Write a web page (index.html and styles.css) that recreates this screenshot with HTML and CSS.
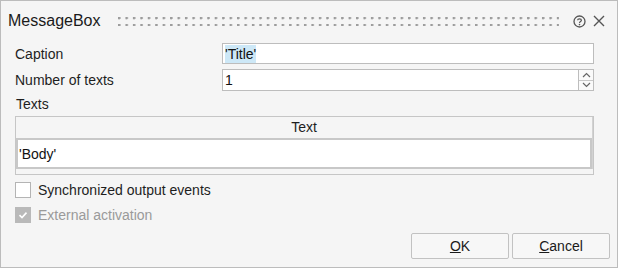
FILE: index.html
```html
<!DOCTYPE html>
<html lang="en">
<head>
    <meta charset="UTF-8">
    <title>MessageBox</title>
    <link rel="stylesheet" href="styles.css">
</head>
<body>
    <div class="window">
        <div class="titlebar">
            <span class="title">MessageBox</span>
            <span class="grip"></span>
            <svg class="icon" width="13" height="13" viewBox="0 0 13 13">
                <circle cx="6.5" cy="6.5" r="5.5" fill="none" stroke="#555" stroke-width="1.3"/>
                <path d="M4.6 5.2 C4.6 3.4 8.4 3.4 8.4 5.2 C8.4 6.5 6.5 6.4 6.5 7.9" fill="none" stroke="#555" stroke-width="1.2"/>
                <circle cx="6.5" cy="9.6" r="0.8" fill="#555"/>
            </svg>
            <svg class="icon close" width="12" height="12" viewBox="0 0 12 12">
                <path d="M1 1 L11 11 M11 1 L1 11" stroke="#555" stroke-width="1.4"/>
            </svg>
        </div>

        <div class="form">
            <label>Caption</label>
            <div class="field"><span class="selected">'Title'</span></div>
            <label>Number of texts</label>
            <div class="number">
                <div class="field">1</div>
                <div class="spinner">
                    <span class="spin">
                        <svg width="9" height="6" viewBox="0 0 9 6"><path d="M1 5 L4.5 1.5 L8 5" fill="none" stroke="#666" stroke-width="1.2"/></svg>
                    </span>
                    <span class="spin">
                        <svg width="9" height="6" viewBox="0 0 9 6"><path d="M1 1 L4.5 4.5 L8 1" fill="none" stroke="#666" stroke-width="1.2"/></svg>
                    </span>
                </div>
            </div>
        </div>

        <div class="section-label">Texts</div>
        <div class="texts-table">
            <div class="column">
                <div class="table-header">Text</div>
                <div class="table-row">'Body'</div>
            </div>
        </div>

        <div class="checks">
            <div class="check">
                <span class="box"></span>
                <span>Synchronized output events</span>
            </div>
            <div class="check disabled">
                <span class="box checked">
                    <svg width="12" height="12" viewBox="0 0 12 12"><path d="M2.5 6.2 L5 8.6 L9.5 3.6" fill="none" stroke="#fff" stroke-width="1.6"/></svg>
                </span>
                <span>External activation</span>
            </div>
        </div>

        <div class="buttons">
            <button class="btn"><u>O</u>K</button>
            <button class="btn"><u>C</u>ancel</button>
        </div>
    </div>
</body>
</html>
```

FILE: styles.css
```css
body {
    margin: 0;
    font-family: "Liberation Sans", Arial, sans-serif;
    font-size: 14px;
    color: #1e1e1e;
}

/* Window frame */
.window {
    width: 618px;
    height: 268px;
    box-sizing: border-box;
    border: 1px solid #bcbcbc;
    background-color: #f5f5f5;
    display: flex;
    flex-direction: column;
}

/* Title bar */
.titlebar {
    height: 40px;
    display: flex;
    align-items: center;
    padding: 0 12px 0 7px;
}

.title {
    font-size: 16px;
    color: #1a1a1a;
}

.grip {
    flex: 1;
    height: 9px;
    margin: 0 14px 0 17px;
    background-image: radial-gradient(circle at 1px 1px, #9c9c9c 1.3px, transparent 1.7px);
    background-size: 7.45px 7px;
}

.icon {
    display: block;
}

.close {
    margin-left: 7px;
}

/* Caption / number rows */
.form {
    display: grid;
    grid-template-columns: 207px 1fr;
    grid-template-rows: 21px 22px;
    row-gap: 5px;
    margin: 2px 23px 0 14px;
    align-items: center;
}

.field {
    height: 100%;
    box-sizing: border-box;
    border: 1px solid #bdbdbd;
    background: #fff;
    padding: 0 2px;
    display: flex;
    align-items: center;
    color: #111;
}

.selected {
    background-color: #cde8f7;
    padding: 1px 0;
}

.number {
    display: flex;
    height: 100%;
}

.number .field {
    flex: 1;
}

.spinner {
    width: 15px;
    display: flex;
    flex-direction: column;
    border: 1px solid #bdbdbd;
    border-left: none;
    box-sizing: border-box;
    background: #fafafa;
}

.spin {
    flex: 1;
    display: flex;
    align-items: center;
    justify-content: center;
}

.spin + .spin {
    border-top: 1px solid #c8c8c8;
}

/* Texts table */
.section-label {
    margin: 5px 0 0 15px;
    height: 16px;
    line-height: 16px;
}

.texts-table {
    margin: 4px 23px 0 14px;
    height: 59px;
    box-sizing: border-box;
    border: 1px solid #c6c6c6;
    display: flex;
}

.column {
    width: 576px;
    border-right: 1px solid #d2d2d2;
    height: 52px;
}

.table-header {
    height: 21px;
    line-height: 21px;
    text-align: center;
}

.table-row {
    height: 31px;
    box-sizing: border-box;
    border: 2px solid #c8c8c8;
    background: #fff;
    padding-left: 1px;
    display: flex;
    align-items: center;
    color: #111;
}

/* Checkboxes */
.checks {
    margin: 7px 0 0 14px;
    display: flex;
    flex-direction: column;
    gap: 9px;
}

.check {
    display: flex;
    align-items: center;
    gap: 7px;
    height: 16px;
}

.box {
    width: 16px;
    height: 16px;
    box-sizing: border-box;
    border: 1px solid #b4b4b4;
    background: #fff;
    display: flex;
    align-items: center;
    justify-content: center;
}

.box.checked {
    background: #b9b9b9;
    border-color: #b9b9b9;
}

.check.disabled {
    color: #9a9a9a;
}

/* Buttons */
.buttons {
    margin: auto 7px 8px 0;
    display: flex;
    justify-content: flex-end;
    gap: 3px;
}

.btn {
    width: 98px;
    height: 26px;
    border: 1px solid #c2c2c2;
    border-radius: 2px;
    background: #f7f7f7;
    font-family: "Liberation Sans", Arial, sans-serif;
    font-size: 14px;
    color: #1a1a1a;
    padding: 0;
}
```
